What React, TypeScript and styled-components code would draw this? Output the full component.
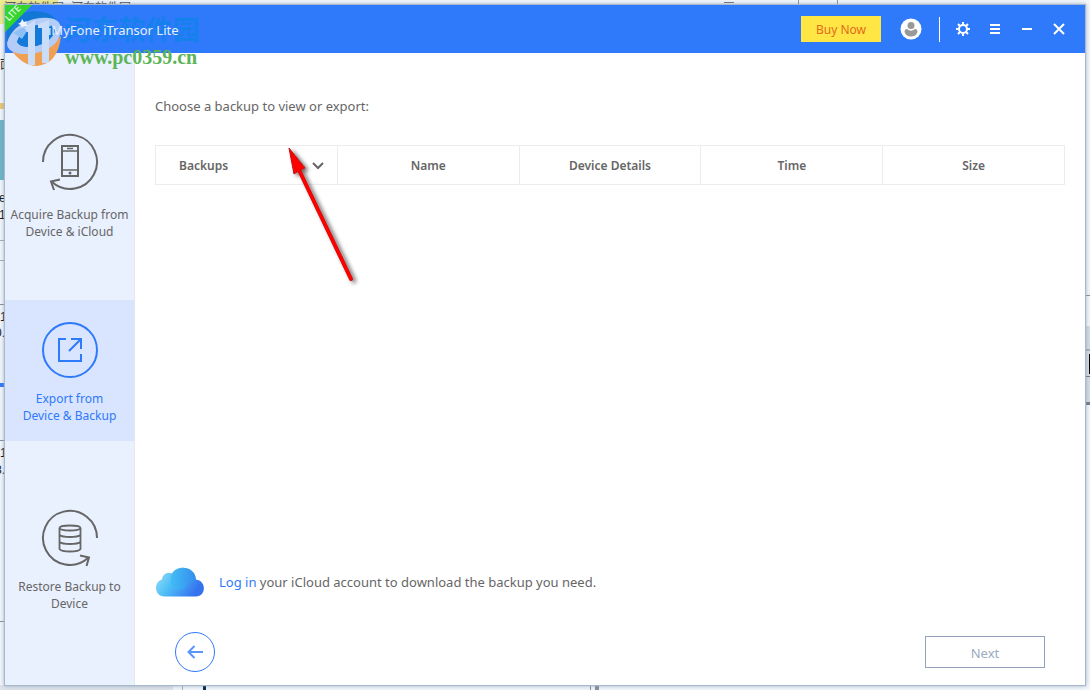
import React from "react";
import styled, { createGlobalStyle } from "styled-components";

const GlobalStyle = createGlobalStyle`
  * { box-sizing: border-box; }
  body {
    margin: 0;
    background: #f4f8fb;
    color: #666;
    font-family: "Noto Sans", "Open Sans", "Noto Sans CJK SC", sans-serif;
    font-size: 13px;
  }
  button { font-family: inherit; cursor: pointer; }
`;

const Desktop = styled.div`
  position: relative;
  display: flex;
  min-height: 100vh;
  padding: 5px;
  overflow: hidden;
`;

/* Pieces of the windows that stay visible behind the application */
const Piece = styled.div<{ $x?: number; $y?: number; $right?: boolean; $bottom?: boolean; $w: number; $h: number; $color: string }>`
  position: absolute;
  ${(p) => (p.$right ? `right: ${p.$x ?? 0}px;` : `left: ${p.$x ?? 0}px;`)}
  ${(p) => (p.$bottom ? "bottom: 0;" : `top: ${p.$y ?? 0}px;`)}
  width: ${(p) => p.$w}px;
  height: ${(p) => p.$h}px;
  background: ${(p) => p.$color};
`;

const PieceText = styled.span<{ $x: number; $y: number; $color?: string }>`
  position: absolute;
  left: ${(p) => p.$x}px;
  top: ${(p) => p.$y}px;
  color: ${(p) => p.$color ?? "#111"};
  font: 12px/16px "Liberation Sans", "Noto Sans CJK SC", sans-serif;
  white-space: nowrap;
`;

const Window = styled.div`
  position: relative;
  flex: 1;
  display: flex;
  flex-direction: column;
  background: #fff;
  box-shadow: 0 0 1px 1px #a9b9cc, 0 0 5px 1px rgba(90, 120, 155, 0.45);
`;

const TitleBar = styled.header`
  display: flex;
  align-items: center;
  height: 48px;
  padding: 0 14px 0 43px;
  background: #2f79fb;
  color: #fff;
`;

const AppTitle = styled.h1`
  position: relative;
  z-index: 1;
  flex: 1;
  margin: 0;
  padding-top: 2px;
  color: #e6f0ff;
  font-size: 13px;
  line-height: 20px;
  font-weight: 400;
`;

const BuyButton = styled.button`
  width: 80px;
  height: 26px;
  margin-right: 18px;
  padding: 2px 0 0;
  border: 0;
  background: #ffe645;
  color: #e26a1c;
  font-size: 12px;
  line-height: 20px;
`;

const BarButton = styled.button`
  display: flex;
  align-items: center;
  justify-content: center;
  width: 24px;
  height: 24px;
  padding: 0;
  border: 0;
  background: none;
  color: #fff;
`;

const BarDivider = styled.div`
  width: 1px;
  height: 25px;
  margin: 0 11px 0 16px;
  background: #fff;
`;

const BarTools = styled.div`
  display: flex;
  gap: 8px;
`;

const Body = styled.div`
  flex: 1;
  display: flex;
`;

const Sidebar = styled.nav`
  display: flex;
  flex-direction: column;
  gap: 47px;
  width: 130px;
  padding-top: 59px;
  background: #e9f0fe;
  border-right: 1px solid #e4e7ec;
`;

const NavItem = styled.button<{ $active?: boolean; $spaced?: boolean }>`
  display: flex;
  flex-direction: column;
  align-items: center;
  gap: ${(p) => (p.$spaced ? 14 : 10)}px;
  height: 141px;
  padding: 20px 0 0;
  border: 0;
  background: ${(p) => (p.$active ? "#d9e5fe" : "transparent")};
  color: ${(p) => (p.$active ? "#2f79fb" : "#666")};
  font-size: 12px;
  line-height: 17px;
  white-space: nowrap;
`;

const Main = styled.main`
  flex: 1;
  display: flex;
  flex-direction: column;
  padding: 43px 20px 13px;
`;

const Prompt = styled.p`
  margin: 0 0 29px;
  line-height: 20px;
`;

const BackupTable = styled.table`
  width: 100%;
  border-collapse: separate;
  border-spacing: 0;
  table-layout: fixed;
  border: solid #ececec;
  border-width: 0 0 0 1px;
`;

const HeadCell = styled.th`
  height: 40px;
  padding: 2px 0 0;
  border: solid #ececec;
  border-width: 1px 1px 1px 0;
  font-size: 12px;
  line-height: 20px;
  font-weight: 600;
`;

const SortButton = styled.button`
  display: flex;
  align-items: center;
  justify-content: space-between;
  width: 100%;
  padding: 0 13px 0 23px;
  border: 0;
  background: none;
  color: inherit;
  font-size: inherit;
  font-weight: inherit;
  line-height: inherit;
`;

const CloudRow = styled.div`
  display: flex;
  align-items: center;
  gap: 14px;
  margin-top: auto;
  line-height: 20px;

  p { margin: 0; }
`;

const LoginLink = styled.a`
  color: #2f79fb;
  text-decoration: none;
`;

const Footer = styled.footer`
  display: flex;
  align-items: center;
  justify-content: space-between;
  margin-top: 35px;
  padding: 0 20px;
`;

const BackButton = styled.button`
  display: flex;
  align-items: center;
  justify-content: center;
  width: 40px;
  height: 40px;
  padding: 0;
  border: 1px solid #2f79fb;
  border-radius: 50%;
  background: #fff;
  color: #5b95fb;
`;

const NextButton = styled.button`
  width: 120px;
  height: 32px;
  padding: 2px 0 0;
  border: 1px solid #91a3ba;
  background: #fff;
  color: #9aabc0;
  font-size: 13px;
  line-height: 20px;
`;

const LiteRibbon = styled.div`
  position: absolute;
  z-index: 1;
  left: 0;
  top: 0;
  width: 27px;
  height: 27px;
  background: #35d52f;
  clip-path: polygon(0 0, 100% 0, 0 100%);

  span {
    position: absolute;
    left: -8px;
    top: 3px;
    width: 32px;
    color: #fff;
    font-size: 9px;
    line-height: 10px;
    text-align: center;
    transform: rotate(-45deg);
  }
`;

const Watermark = styled.div`
  position: absolute;
  left: 0;
  top: 5px;
  display: flex;
  gap: 4px;
  pointer-events: none;
`;

const WatermarkText = styled.div`
  display: flex;
  flex-direction: column;
  padding-top: 6px;
  white-space: nowrap;
`;

const WatermarkName = styled.span`
  color: #0b85e6;
  opacity: 0.7;
  font: 700 27px/36px "Noto Sans CJK SC", sans-serif;
`;

const WatermarkSite = styled.span`
  color: #5cb558;
  font: 700 20px/20px "Liberation Serif", serif;
`;

const Pointer = styled.svg`
  position: absolute;
  left: 278px;
  top: 138px;
  pointer-events: none;
`;

const AcquireIcon = () => (
  <svg width="58" height="60" viewBox="0 0 58 60" fill="none" stroke="currentColor" strokeWidth="2" aria-hidden="true">
    <path d="M2 30A27 27 0 1 1 11 50" />
    <path d="M19 47.500L10 49.500L13 58" />
    <rect x="21" y="14" width="16" height="30" />
    <path d="M21 19H37M21 38H37M26 16.500H32" strokeWidth="1.500" />
    <circle cx="29" cy="41" r="1.500" fill="currentColor" stroke="none" />
  </svg>
);

const ExportIcon = () => (
  <svg width="58" height="60" viewBox="0 0 58 60" fill="none" stroke="currentColor" strokeWidth="2" aria-hidden="true">
    <circle cx="29" cy="30" r="27" />
    <path d="M25 19H18V41H40V34" />
    <path d="M30 19H40V29M40 19L28 31" />
  </svg>
);

const RestoreIcon = () => (
  <svg width="58" height="60" viewBox="0 0 58 60" fill="none" stroke="currentColor" strokeWidth="2" aria-hidden="true">
    <path d="M56 30A27 27 0 1 0 47 50" />
    <path d="M39 47.500L48 49.500L45.500 58" />
    <g strokeWidth="1.800">
      <ellipse cx="29" cy="20" rx="10.500" ry="2.500" />
      <path d="M18.500 20V41Q20 43.500 29 43.500Q38 43.500 39.500 41V20M18.500 27Q21 29 29 29Q37 29 39.500 27M18.500 34Q21 36 29 36Q37 36 39.500 34" />
    </g>
  </svg>
);

const CloudIcon = () => (
  <svg width="50" height="30" viewBox="0 0 50 30" aria-hidden="true">
    <defs>
      <linearGradient id="cloudBase" x1="0" y1="0" x2="1" y2="0.400">
        <stop offset="0" stopColor="#a5e2f4" />
        <stop offset="0.450" stopColor="#4fc0f7" />
        <stop offset="1" stopColor="#3573ee" />
      </linearGradient>
      <linearGradient id="cloudDome" x1="0" y1="1" x2="1" y2="0">
        <stop offset="0" stopColor="#35c3f7" />
        <stop offset="1" stopColor="#2a82e6" />
      </linearGradient>
    </defs>
    <path d="M10 29.500C-1.500 29.500 -1.500 15 7 12.500A7 7 0 0 1 17 6.500C22 -2.500 40 -1.500 41 12.500C52 14 51 29.500 41 29.500Z" fill="url(#cloudBase)" />
    <path d="M17 6.500C22 -2.500 40 -1.500 41 12.500Q36 13 33 17Q29 25 20 22Q13 17 17 6.500Z" fill="url(#cloudDome)" opacity="0.500" />
  </svg>
);

const UserIcon = () => (
  <svg width="22" height="22" viewBox="0 0 22 22" aria-hidden="true">
    <circle cx="11" cy="11" r="10.500" fill="#fff" />
    <circle cx="11" cy="7.500" r="3.500" fill="#999" />
    <path d="M4.500 14Q4.500 11 7 11Q11 14.500 15 11Q17.500 11 17.500 14Q16 18.500 11 18.500Q6 18.500 4.500 14Z" fill="#999" />
  </svg>
);

const GearIcon = () => (
  <svg width="14" height="14" viewBox="0 0 14 14" fill="none" stroke="currentColor" strokeWidth="2" aria-hidden="true">
    <circle cx="7" cy="7" r="4" />
    <path d="M7 0V2.500M7 11.500V14M0 7H2.500M11.500 7H14M2 2L3.800 3.800M10.200 10.200L12 12M12 2L10.200 3.800M3.800 10.200L2 12" />
  </svg>
);

const WatermarkLogo = () => (
  <svg width="61" height="62" viewBox="0 5 61 62" aria-hidden="true">
    <path d="M12 51Q23 66 37 66Q58 64 61 36Q40 57 12 51Z" fill="#f0a054" />
    <path d="M7 43Q2 14 32 11Q51 11 57 21Q33 17 16 35Q10 42 7 43Z" fill="#1377d6" />
    <path d="M7 43Q12 25 34 19Q62 14 61 31Q58 50 31 54Q7 55 7 43ZM17 42Q21 49 36 46Q53 41 55 30Q52 22 37 25Q20 31 17 42Z" fill="#b4cdf8" fillRule="evenodd" />
    <path d="M17 42Q20 31 37 25Q52 22 55 30Q53 41 36 46Q21 49 17 42Z" fill="#1479d8" />
    <path d="M26 26L35 20V65H28V32H24ZM38 24L49 20V63H42V28H38Z" fill="#c9dcf8" />
    <path d="M13 33L23 27L27 31L22 39L18 36Z" fill="#8fc0f5" />
    <path d="M22 19L24 22L27 21L26 24L28 26L24 26L22 28L21 25L18 24L21 22Z" fill="#eef5ff" />
  </svg>
);

const Backdrop = () => (
  <div aria-hidden="true">
    <Piece $w={58} $h={24} $color="#f0ee8e" />
    <PieceText $x={4} $y={0} $color="#555">河东软件园</PieceText>
    <PieceText $x={71} $y={0} $color="#555">河东软件园</PieceText>
    <Piece $x={798} $w={1} $h={5} $color="#8a929a" />
    <Piece $x={837} $w={1} $h={5} $color="#8a929a" />
    <Piece $x={724} $y={2} $w={10} $h={1} $color="#777" />
    <PieceText $x={0} $y={57}>面</PieceText>
    <Piece $y={103} $w={5} $h={6} $color="#edc873" />
    <Piece $y={120} $w={5} $h={60} $color="#6fb7c8" />
    <PieceText $x={-1} $y={190}>e</PieceText>
    <PieceText $x={-5} $y={207}>-1</PieceText>
    <Piece $y={240} $w={5} $h={1} $color="#a5adb5" />
    <Piece $y={260} $w={5} $h={1} $color="#a5adb5" />
    <Piece $y={304} $w={5} $h={1} $color="#8a929a" />
    <PieceText $x={0} $y={309}>1</PieceText>
    <PieceText $x={-5} $y={325}>0.</PieceText>
    <Piece $y={383} $w={5} $h={4} $color="#2f79fb" />
    <Piece $y={440} $w={5} $h={1} $color="#8a929a" />
    <PieceText $x={0} $y={445}>1</PieceText>
    <PieceText $x={-5} $y={462}>8.</PieceText>
    <Piece $y={621} $w={5} $h={1} $color="#8a929a" />
    <Piece $right $y={295} $w={5} $h={1} $color="#8a929a" />
    <Piece $right $y={326} $w={5} $h={78} $color="#d8dde3" />
    <Piece $right $y={349} $w={5} $h={2} $color="#a9b0b9" />
    <Piece $right $y={354} $w={1} $h={20} $color="#000" />
    <Piece $right $y={376} $w={5} $h={1} $color="#777" />
    <Piece $right $y={402} $w={5} $h={3} $color="#777d85" />
    <Piece $bottom $w={173} $h={5} $color="#dfe4ea" />
    <Piece $bottom $x={182} $w={1} $h={5} $color="#a9b0b9" />
    <Piece $bottom $x={203} $w={3} $h={5} $color="#05284b" />
    <Piece $bottom $x={590} $w={1} $h={5} $color="#8a929a" />
    <Piece $bottom $x={595} $w={4} $h={5} $color="#8a929a" />
  </div>
);

export default function App() {
  return (
    <Desktop>
      <GlobalStyle />
      <Backdrop />
      <Window>
        <TitleBar>
          <AppTitle>iMyFone iTransor Lite</AppTitle>
          <BuyButton type="button">Buy Now</BuyButton>
          <BarButton type="button" aria-label="Account"><UserIcon /></BarButton>
          <BarDivider />
          <BarTools>
            <BarButton type="button" aria-label="Settings"><GearIcon /></BarButton>
            <BarButton type="button" aria-label="Menu">
              <svg width="10" height="10" stroke="currentColor" strokeWidth="2"><path d="M0 1H10M0 5H10M0 9H10" /></svg>
            </BarButton>
            <BarButton type="button" aria-label="Minimize">
              <svg width="10" height="10" stroke="currentColor" strokeWidth="2"><path d="M0 5H10" /></svg>
            </BarButton>
            <BarButton type="button" aria-label="Close">
              <svg width="12" height="12" stroke="currentColor" strokeWidth="2"><path d="M1 1L11 11M11 1L1 11" /></svg>
            </BarButton>
          </BarTools>
        </TitleBar>
        <Body>
          <Sidebar>
            <NavItem type="button" $spaced>
              <AcquireIcon />
              <span>Acquire Backup from<br />Device &amp; iCloud</span>
            </NavItem>
            <NavItem type="button" $active>
              <ExportIcon />
              <span>Export from<br />Device &amp; Backup</span>
            </NavItem>
            <NavItem type="button">
              <RestoreIcon />
              <span>Restore Backup to<br />Device</span>
            </NavItem>
          </Sidebar>
          <Main>
            <Prompt>Choose a backup to view or export:</Prompt>
            <BackupTable>
              <thead>
                <tr>
                  <HeadCell scope="col">
                    <SortButton type="button">
                      Backups
                      <svg width="12" height="8" fill="none" stroke="currentColor" strokeWidth="2" aria-hidden="true"><path d="M1 1L6 6L11 1" /></svg>
                    </SortButton>
                  </HeadCell>
                  <HeadCell scope="col">Name</HeadCell>
                  <HeadCell scope="col">Device Details</HeadCell>
                  <HeadCell scope="col">Time</HeadCell>
                  <HeadCell scope="col">Size</HeadCell>
                </tr>
              </thead>
            </BackupTable>
            <CloudRow>
              <CloudIcon />
              <p><LoginLink href="#login">Log in</LoginLink> your iCloud account to download the backup you need.</p>
            </CloudRow>
            <Footer>
              <BackButton type="button" aria-label="Back">
                <svg width="16" height="14" fill="none" stroke="currentColor" strokeWidth="2"><path d="M16 7H1M7.500 1L1.500 7L7.500 13" /></svg>
              </BackButton>
              <NextButton type="button">Next</NextButton>
            </Footer>
          </Main>
        </Body>
        <LiteRibbon><span>LITE</span></LiteRibbon>
      </Window>
      <Watermark aria-hidden="true">
        <WatermarkLogo />
        <WatermarkText>
          <WatermarkName>河东软件园</WatermarkName>
          <WatermarkSite>www.pc0359.cn</WatermarkSite>
        </WatermarkText>
      </Watermark>
      <Pointer width="90" height="155" viewBox="278 138 90 155" aria-hidden="true">
        <defs>
          <filter id="pointerShadow" x="-20%" y="-20%" width="150%" height="150%">
            <feDropShadow dx="3" dy="2" stdDeviation="2" floodOpacity="0.600" />
          </filter>
        </defs>
        <g filter="url(#pointerShadow)">
          <path d="M299 170L351 279" stroke="#c01010" strokeWidth="4" strokeLinecap="round" />
          <path d="M289 148L305 168L300 170L294 174Z" fill="#f00" stroke="#c01010" strokeWidth="1" />
          <path d="M298 168L351 279" stroke="#f00" strokeWidth="3" strokeLinecap="round" />
        </g>
      </Pointer>
    </Desktop>
  );
}
